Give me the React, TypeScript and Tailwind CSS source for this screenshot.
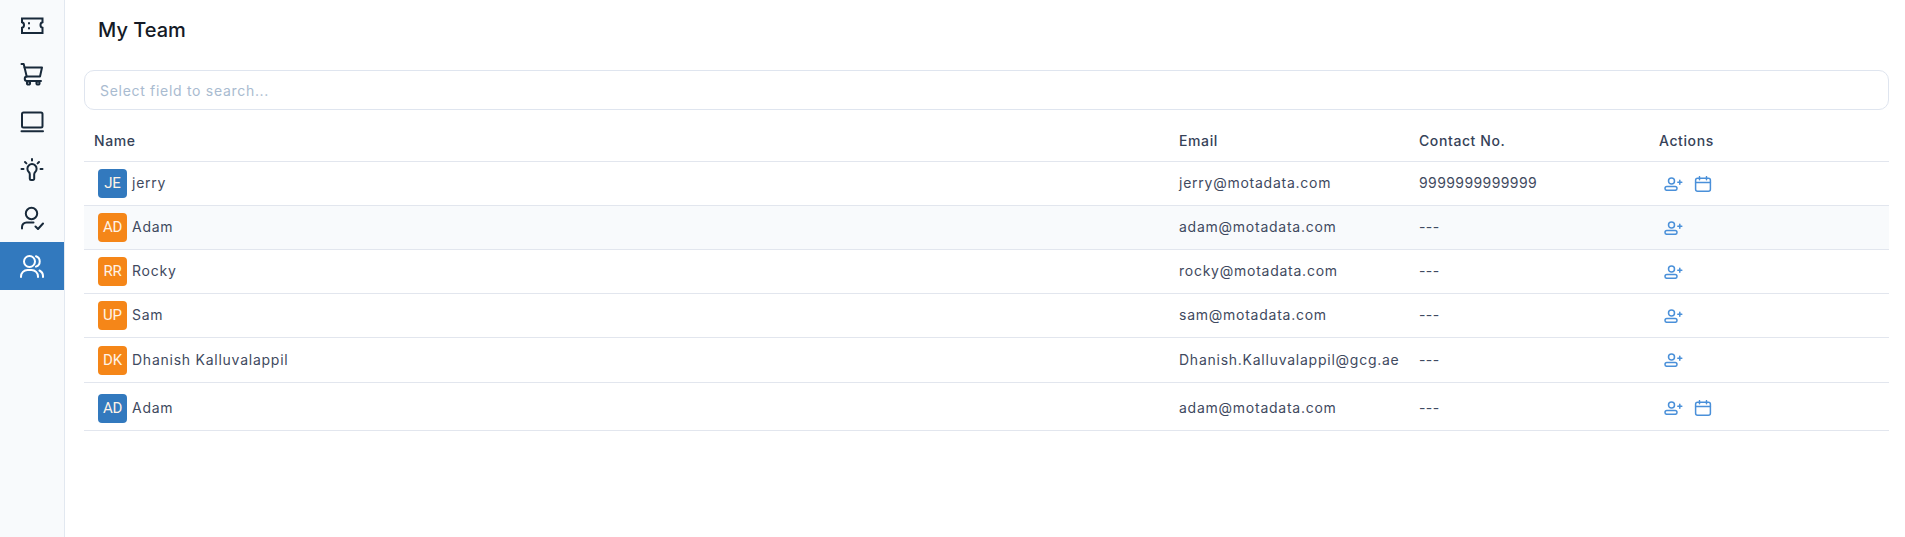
const FONT = 'font-[Inter,"Noto_Sans",sans-serif]';

type Member = {
    initials: string;
    name: string;
    email: string;
    contact: string;
    avatar: string;
    height: string;
    striped?: boolean;
    calendar?: boolean;
};

const members: Member[] = [
    { initials: 'JE', name: 'jerry', email: 'jerry@motadata.com', contact: '9999999999999', avatar: 'bg-[#3279be]', height: 'h-[44px]', calendar: true },
    { initials: 'AD', name: 'Adam', email: 'adam@motadata.com', contact: '---', avatar: 'bg-[#f58618]', height: 'h-[44px]', striped: true },
    { initials: 'RR', name: 'Rocky', email: 'rocky@motadata.com', contact: '---', avatar: 'bg-[#f58618]', height: 'h-[44px]' },
    { initials: 'UP', name: 'Sam', email: 'sam@motadata.com', contact: '---', avatar: 'bg-[#f58618]', height: 'h-[44px]' },
    { initials: 'DK', name: 'Dhanish Kalluvalappil', email: 'Dhanish.Kalluvalappil@gcg.ae', contact: '---', avatar: 'bg-[#f58618]', height: 'h-[45px]' },
    { initials: 'AD', name: 'Adam', email: 'adam@motadata.com', contact: '---', avatar: 'bg-[#3279be]', height: 'h-[48px] pt-[3px]', calendar: true },
];

function NavIcon({ children }: { children: React.ReactNode }) {
    return (
        <svg width="24" height="24" viewBox="0 0 24 24" fill="none" stroke="currentColor" strokeWidth="2" strokeLinecap="round" strokeLinejoin="round">
            {children}
        </svg>
    );
}

function TicketIcon() {
    return (
        <NavIcon>
            <path d="M2 4.5h20.5v3.7a2.8 2.8 0 0 0-2 2.8 2.8 2.8 0 0 0 2 2.8v5.2H2v-5.2a2.8 2.8 0 0 0 2-2.8 2.8 2.8 0 0 0-2-2.8z" strokeLinejoin="miter" />
            <path d="M9 9v.6M9 14v.6" />
        </NavIcon>
    );
}

function CartIcon() {
    return (
        <NavIcon>
            <path d="M1.5 2h2.2l3 12.5" />
            <path d="M4.6 5.5h17.4l-2 9H7a2 2 0 0 0 0 4.5h14" />
            <circle cx="8.5" cy="21" r="1.6" />
            <circle cx="18" cy="21" r="1.6" />
        </NavIcon>
    );
}

function LaptopIcon() {
    return (
        <NavIcon>
            <rect x="2" y="2.5" width="20.5" height="15" rx="1.5" />
            <path d="M1.5 21.3h21.5" />
        </NavIcon>
    );
}

function BulbIcon() {
    return (
        <NavIcon>
            <path d="M8.8 14a4.6 4.6 0 1 1 6.4 0c-.7.7-1 1.3-1 2.2v4.5a1.2 1.2 0 0 1-1.2 1.2h-2a1.2 1.2 0 0 1-1.2-1.2v-4.5c0-.9-.3-1.5-1-2.2z" />
            <path d="M1.5 11h2M20.5 11h2M12 1v1.5M5 4l1.4 1.4M19 4l-1.4 1.4" />
        </NavIcon>
    );
}

function UserCheckIcon() {
    return (
        <NavIcon>
            <circle cx="11.5" cy="7.5" r="5.7" />
            <path d="M2 22.5v-1.5a4.5 4.5 0 0 1 4.5-4.5h7" />
            <path d="M15.5 20.5l2.5 2.5 5-5.5" />
        </NavIcon>
    );
}

function UsersIcon() {
    return (
        <NavIcon>
            <circle cx="9.5" cy="7.5" r="5.5" />
            <path d="M1 23v-.5A6.5 6.5 0 0 1 7.5 16h4a6.5 6.5 0 0 1 6.5 6.5v.5" />
            <path d="M16 2.2a5.5 5.5 0 0 1 0 10.4M19.5 16.5a6.5 6.5 0 0 1 3.5 6v.5" />
        </NavIcon>
    );
}

function AddUserIcon() {
    return (
        <svg width="19" height="14" viewBox="0 0 19 14" fill="none" stroke="#4a90d9" strokeWidth="1.5" strokeLinecap="round">
            <circle cx="7.5" cy="4" r="3" />
            <rect x="1" y="9.5" width="12" height="3.8" rx="1.9" />
            <path d="M15.8 3.2v4M13.8 5.2h4" />
        </svg>
    );
}

function CalendarIcon() {
    return (
        <svg width="18" height="16" viewBox="0 0 18 16" fill="none" stroke="#4a90d9" strokeWidth="1.5" strokeLinecap="round">
            <rect x="1.6" y="2.2" width="14.8" height="13" rx="2" />
            <path d="M1.6 6.6h14.8M5.5 .7v3M12.5 .7v3" />
        </svg>
    );
}

export default function App() {
    const navIcons = [<TicketIcon />, <CartIcon />, <LaptopIcon />, <BulbIcon />, <UserCheckIcon />];

    return (
        <div className={`flex h-[537px] w-[1905px] bg-white ${FONT}`}>
            <aside className="w-[65px] shrink-0 border-r border-[#e2e8f0] bg-[#f8fafc] pt-[2px]">
                {navIcons.map((icon, i) => (
                    <div key={i} className="flex h-[48px] items-center justify-center text-[#18293a]">
                        {icon}
                    </div>
                ))}
                <div className="flex h-[48px] items-center justify-center bg-[#3279be] text-white">
                    <UsersIcon />
                </div>
            </aside>

            <main className="min-w-0 flex-1 pl-[19px] pr-[16px]">
                <h1 className="pl-[14px] pt-[18px] text-[20px] font-medium leading-[24px] text-[#141a26]">My Team</h1>
                <div className="mt-[28px] flex h-[40px] items-center rounded-[10px] border border-[#dfe5ef] pl-[15px] text-[14px] tracking-[0.7px] text-[#a9bbd0]">
                    Select field to search...
                </div>

                <div className="mt-[10px] flex h-[42px] items-center border-b border-[#e2e6ee] pb-[1px] text-[14px] font-medium tracking-[0.6px] text-[#364258]">
                    <div className="w-[1085px] pl-[10px]">Name</div>
                    <div className="w-[240px] pl-[10px]">Email</div>
                    <div className="w-[240px] pl-[10px]">Contact No.</div>
                    <div className="flex-1 pl-[10px]">Actions</div>
                </div>

                {members.map((m, i) => (
                    <div
                        key={i}
                        className={`flex items-center border-b border-[#e2e6ee] text-[14px] text-[#3f4a60] ${m.height} ${m.striped ? 'bg-[#f8fafc]' : ''}`}
                    >
                        <div className="flex w-[1085px] items-center pl-[14px] tracking-[0.75px]">
                            <span className={`mr-[5px] flex h-[29px] w-[29px] items-center justify-center rounded-[4px] font-[Roboto,sans-serif] text-[15px] tracking-[-0.2px] text-[#fff3e6] ${m.avatar}`}>
                                {m.initials}
                            </span>
                            <span className="pb-[2px]">{m.name}</span>
                        </div>
                        <div className="w-[240px] pb-[2px] pl-[10px] tracking-[0.75px]">{m.email}</div>
                        <div className="w-[240px] pb-[2px] pl-[10px] tracking-[0.4px]">{m.contact}</div>
                        <div className="flex flex-1 items-center gap-[11px] pl-[15px]">
                            <AddUserIcon />
                            {m.calendar && <CalendarIcon />}
                        </div>
                    </div>
                ))}
            </main>
        </div>
    );
}
